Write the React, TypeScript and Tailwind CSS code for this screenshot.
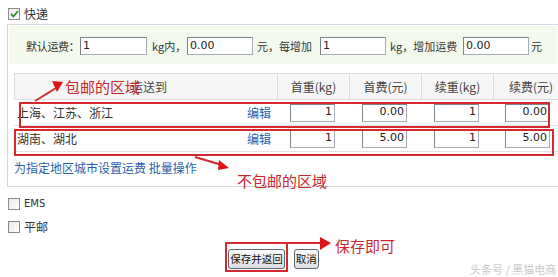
import React from 'react'

const cjk = "font-['Noto_Sans_CJK_SC',sans-serif]"

function Check({ checked }: { checked?: boolean }) {
  return (
    <span className="flex h-[12px] w-[12px] items-center justify-center border border-[#8a8a8a] bg-gradient-to-br from-[#e9e9e9] to-white">
      {checked && (
        <svg width="9" height="8" viewBox="0 0 9 8">
          <path d="M1 4 L3.5 6.5 L8 1" stroke="#2f8a2f" strokeWidth="1.8" fill="none" />
        </svg>
      )}
    </span>
  )
}

function Field({ value, w, right }: { value: string; w: string; right?: boolean }) {
  return (
    <span
      className={`flex h-[18px] flex-none ${w} items-center border border-[#a5acb5] border-t-[#7b8590] border-l-[#7b8590] bg-white px-[2px] font-['DejaVu_Sans',sans-serif] text-[11px] text-[#222] ${right ? 'justify-end' : ''}`}
    >
      {value}
    </span>
  )
}

const rows = [
  { area: '上海、江苏、浙江', a: '1', b: '0.00', c: '1', d: '0.00' },
  { area: '湖南、湖北', a: '1', b: '5.00', c: '1', d: '5.00' },
]

export default function App() {
  return (
    <div className={`relative h-[277px] w-[558px] overflow-hidden bg-white text-[12px] text-[#333] ${cjk}`}>
      <div className="flex items-center gap-[4px] pl-[8px] pt-[7px] leading-[14px]">
        <Check checked />
        <span>快递</span>
      </div>

      <div className="ml-[7px] mt-[3px] h-[163px] border border-r-0 border-[#d5d8dc]">
        <div className="m-[1px] flex h-[38px] items-center whitespace-nowrap bg-[#f3faed] pl-[17px] pt-[2px] text-[11px]">
          <span className="w-[54px] flex-none tracking-[-0.3px]">默认运费：</span>
          <Field value="1" w="w-[67px]" />
          <span className="w-[40px] flex-none pl-[5px]">kg内，</span>
          <Field value="0.00" w="w-[66px]" />
          <span className="w-[67px] flex-none pl-[4px]">元，每增加</span>
          <Field value="1" w="w-[66px]" />
          <span className="w-[77px] flex-none pl-[4px]">kg，增加运费</span>
          <Field value="0.00" w="w-[66px]" />
          <span className="ml-[2px] flex-none">元</span>
        </div>

        <div className="ml-[6px] mt-[9px] w-[560px] border-t border-[#dcdcdc]">
          <div className="grid h-[26px] grid-cols-[263px_72px_72px_72px_81px] border-b border-[#dcdcdc] bg-[#f6f6f6] text-[#444]">
            <div className="flex items-center justify-center border-l border-[#dcdcdc] pl-[6px]">运送到</div>
            <div className="flex items-center justify-center border-l border-[#dcdcdc]">首重(kg)</div>
            <div className="flex items-center justify-center border-l border-[#dcdcdc]">首费(元)</div>
            <div className="flex items-center justify-center border-l border-[#dcdcdc]">续重(kg)</div>
            <div className="flex items-center justify-start border-l border-[#dcdcdc] pl-[15px]">续费(元)</div>
          </div>
          {rows.map((r) => (
            <div key={r.area} className="grid h-[26px] grid-cols-[263px_72px_72px_72px_81px] border-b border-[#e4e4e4]">
              <div className="flex items-center justify-between pl-[3px] pr-[6px]">
                <span>{r.area}</span>
                <span className="text-[#2463b3]">编辑</span>
              </div>
              <div className="flex items-center justify-end pr-[14px]">
                <Field value={r.a} w="w-[45px]" right />
              </div>
              <div className="flex items-center justify-end pr-[14px]">
                <Field value={r.b} w="w-[45px]" right />
              </div>
              <div className="flex items-center justify-end pr-[14px]">
                <Field value={r.c} w="w-[45px]" right />
              </div>
              <div className="flex items-center justify-start pl-[12px]">
                <Field value={r.d} w="w-[45px]" right />
              </div>
            </div>
          ))}
          <div className="pt-[7px] text-[#2a5fa8]">为指定地区城市设置运费 批量操作</div>
        </div>
      </div>

      <div className="mt-[10px] flex flex-col gap-[9px] pl-[8px]">
        <div className="flex items-center gap-[4px] leading-[14px]">
          <Check />
          <span className="font-['DejaVu_Sans',sans-serif] text-[10px]">EMS</span>
        </div>
        <div className="flex items-center gap-[4px] leading-[14px]">
          <Check />
          <span>平邮</span>
        </div>
      </div>

      <div className="mt-[15px] flex justify-center gap-[9px] pr-[11px]">
        <button className="flex h-[20px] items-center rounded-[3px] border border-[#5f6770] bg-gradient-to-b from-[#fafafa] to-[#dcdfe3] px-[1px] text-[10.5px] text-[#111]">
          保存并返回
        </button>
        <button className="flex h-[20px] items-center rounded-[3px] border border-[#5f6770] bg-gradient-to-b from-[#fafafa] to-[#dcdfe3] px-[1px] text-[10.5px] text-[#111]">
          取消
        </button>
      </div>

      {/* red annotations */}
      <div className="absolute left-[19px] top-[102px] h-[26px] w-[531px] border-2 border-[#d42a2f]" />
      <div className="absolute left-[14px] top-[129px] h-[27px] w-[540px] border-2 border-[#d42a2f]" />
      <div className="absolute left-[225px] top-[242px] h-[30px] w-[63px] border-2 border-[#d42a2f]" />
      <svg className="absolute left-0 top-0" width="558" height="277" viewBox="0 0 558 277">
        <line x1="35" y1="101" x2="56" y2="88" stroke="#d42a2f" strokeWidth="2" />
        <polygon points="52,81 63,82 57,92" fill="#e0141b" />
        <line x1="195" y1="157" x2="222" y2="165" stroke="#d42a2f" strokeWidth="2" />
        <polygon points="219,160 229,168 218,170" fill="#e0141b" />
        <line x1="287" y1="243" x2="322" y2="243" stroke="#d42a2f" strokeWidth="2" />
        <polygon points="320,237 331,243 320,250" fill="#e0141b" />
      </svg>
      <span className="absolute left-[65px] top-[78px] text-[15px] leading-[18px] text-[#c9282d]">包邮的区域</span>
      <span className="absolute left-[237px] top-[172px] text-[15px] leading-[18px] text-[#c9282d]">不包邮的区域</span>
      <span className="absolute left-[335px] top-[237px] text-[15px] leading-[18px] text-[#c9282d]">保存即可</span>
      <span className="absolute left-[470px] top-[261px] text-[11px] text-[#c9c9c9]">头条号 / 黑猫电商</span>
    </div>
  )
}
